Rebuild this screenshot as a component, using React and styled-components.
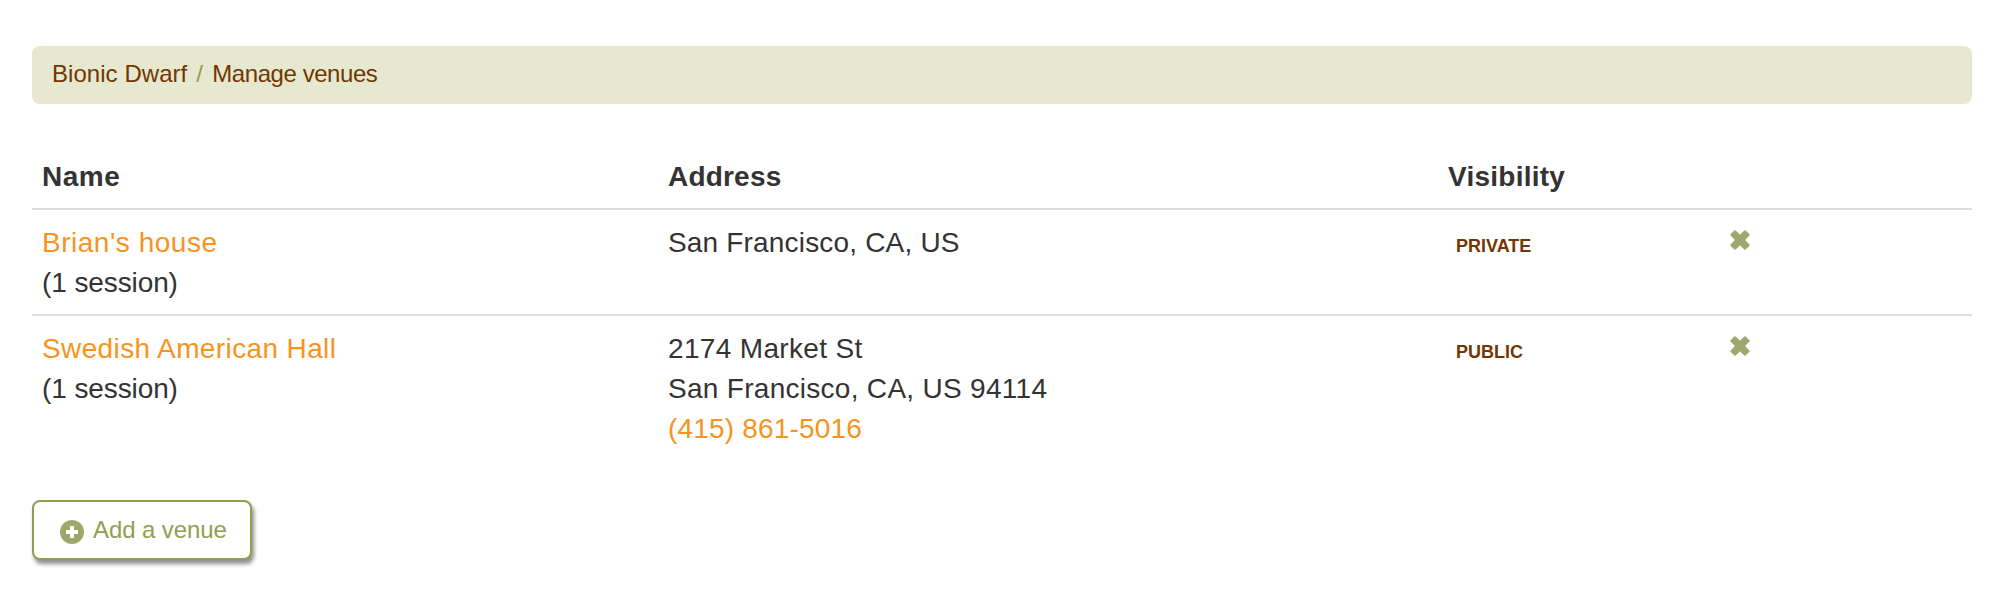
import React from "react";
import styled, { createGlobalStyle } from "styled-components";

const venues = [
  {
    name: { text: "Brian's house", spacing: 0.52 },
    sessions: "(1 session)",
    address: [{ text: "San Francisco, CA, US", spacing: 0.18 }],
    visibility: "Private",
  },
  {
    name: { text: "Swedish American Hall", spacing: 0.38 },
    sessions: "(1 session)",
    address: [
      { text: "2174 Market St", spacing: 0.34 },
      { text: "San Francisco, CA, US 94114", spacing: 0.29 },
    ],
    phone: "(415) 861-5016",
    visibility: "Public",
  },
];

function RemoveIcon() {
  return (
    <svg width="20" height="20" viewBox="0 0 20 20">
      <path
        d="M5 1.2L10 6L15 1.2L18.8 5L14 10L18.8 15L15 18.8L10 14L5 18.8L1.2 15L6 10L1.2 5Z"
        fill="#a0a76c"
        stroke="#a0a76c"
        strokeWidth="1.8"
        strokeLinejoin="round"
      />
    </svg>
  );
}

function PlusIcon() {
  return (
    <svg width="24" height="24" viewBox="0 0 24 24">
      <circle cx="12" cy="12" r="12" fill="#a0a76c" />
      <path d="M12 6v12M6 12h12" stroke="#fff" strokeWidth="4" />
    </svg>
  );
}

export default function App() {
  return (
    <Page>
      <GlobalStyle />
      <Breadcrumb>
        <Crumb href="#" $spacing={0.05}>
          Bionic Dwarf
        </Crumb>
        <Divider>/</Divider>
        <Crumb href="#" $spacing={-0.44}>
          Manage venues
        </Crumb>
      </Breadcrumb>

      <Table>
        <thead>
          <tr>
            <HeadCell $width="626px" $spacing={0.5}>
              Name
            </HeadCell>
            <HeadCell $width="780px" $spacing={0.2}>
              Address
            </HeadCell>
            <HeadCell $width="282px" $spacing={0.25}>
              Visibility
            </HeadCell>
            <HeadCell />
          </tr>
        </thead>
        <tbody>
          {venues.map((venue) => (
            <tr key={venue.name.text}>
              <Cell>
                <Link href="#" $spacing={venue.name.spacing}>
                  {venue.name.text}
                </Link>
                <Line $spacing={-0.1}>{venue.sessions}</Line>
              </Cell>
              <Cell>
                {venue.address.map((line) => (
                  <Line key={line.text} $spacing={line.spacing}>
                    {line.text}
                  </Line>
                ))}
                {venue.phone && (
                  <Link href="#" $spacing={0.18}>
                    {venue.phone}
                  </Link>
                )}
              </Cell>
              <Cell>
                <Label>{venue.visibility}</Label>
              </Cell>
              <Cell>
                <RemoveButton aria-label="Remove venue">
                  <RemoveIcon />
                </RemoveButton>
              </Cell>
            </tr>
          ))}
        </tbody>
      </Table>

      <AddButton>
        <PlusIcon />
        <span>Add a venue</span>
      </AddButton>
    </Page>
  );
}

const GlobalStyle = createGlobalStyle`
  * {
    box-sizing: border-box;
  }

  body {
    margin: 0;
    background: #fff;
    color: #333;
    font-family: "Liberation Sans", Arial, sans-serif;
    font-size: 28px;
    line-height: 40px;
  }
`;

const Page = styled.main`
  min-height: 596px;
  padding: 46px 18px 0 32px;
`;

const Breadcrumb = styled.nav`
  display: flex;
  height: 58px;
  padding: 8px 20px 0;
  border-radius: 8px;
  background: #e6e9cf;
  font-size: 24px;
`;

const Crumb = styled.a`
  color: #733603;
  text-decoration: none;
  letter-spacing: ${(props) => props.$spacing}px;
`;

const Divider = styled.span`
  width: 25px;
  padding-left: 9px;
  color: #929d50;
`;

const Table = styled.table`
  width: 100%;
  margin-top: 40px;
  border-collapse: separate;
  border-spacing: 0;
  table-layout: fixed;
`;

const HeadCell = styled.th`
  width: ${(props) => props.$width || "auto"};
  padding: 13px 10px 11px;
  text-align: left;
  vertical-align: bottom;
  letter-spacing: ${(props) => props.$spacing || 0}px;
`;

const Cell = styled.td`
  padding: 13px 10px 11px;
  border-top: 2px solid #ddd;
  vertical-align: top;
`;

const Line = styled.div`
  white-space: nowrap;
  letter-spacing: ${(props) => props.$spacing}px;
`;

const Link = styled.a`
  display: block;
  color: #f7931e;
  text-decoration: none;
  letter-spacing: ${(props) => props.$spacing}px;
`;

const Label = styled.span`
  display: block;
  padding: 3px 8px 0;
  color: #733603;
  font-size: 18px;
  font-weight: bold;
  letter-spacing: 0;
  text-transform: uppercase;
`;

const RemoveButton = styled.button`
  display: flex;
  margin: 7px 0 0;
  padding: 0;
  border: 0;
  background: none;
`;

const AddButton = styled.button`
  display: flex;
  align-items: center;
  gap: 9px;
  width: 220px;
  height: 60px;
  margin-top: 40px;
  padding: 0 0 0 26px;
  border: 2px solid #929d50;
  border-radius: 8px;
  background: #fff;
  box-shadow: 2px 4px 4px rgba(0, 0, 0, 0.45);
  color: #929d50;
  font-family: inherit;
  font-size: 24px;
  line-height: 40px;
  letter-spacing: -0.1px;

  svg {
    margin-top: 4px;
  }
`;
